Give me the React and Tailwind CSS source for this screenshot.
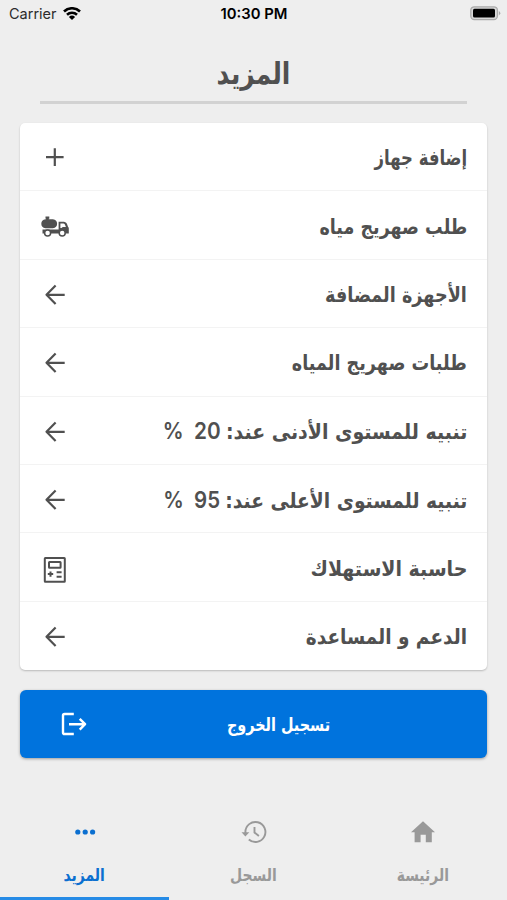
import React from 'react';

const PlusIcon = () => (
  <svg width="30" height="30" viewBox="0 0 30 30" fill="none" stroke="currentColor" strokeWidth="2.2">
    <path d="M14.800 5.300v17.600M6 14.100h17.600" />
  </svg>
);

const ArrowIcon = () => (
  <svg width="30" height="30" viewBox="0 0 30 30" fill="none" stroke="currentColor" strokeWidth="2.2">
    <path d="M15.600 5.600 6.500 14.800l9.100 9.200M6.500 14.800h18.200" strokeLinejoin="round" />
  </svg>
);

const TankerIcon = () => (
  <svg width="30" height="30" viewBox="0 0 30 30" fill="currentColor">
    <path d="M5.500 4.500h3.800v2.200h-.6v.6h4.200q4.200.600 4.200 4.500t-4.200 4.500H5.500Q1.300 15.700 1.300 11.800t4.200-4.500h.6v-.6h-.6z" />
    <path d="M2.500 17.400H18.600V9.800h5.200c1.600 0 2.500.9 3.200 2.300l1 2.700q.8.500.8 1.700v5H2.500z" />
    <path d="M20.400 11.500h2.800q1.200 0 1.700 1l1 2.600h-3.100l-1.300 1h-1.100z" fill="#fff" />
    <circle cx="7.600" cy="21" r="3" fill="#fff" stroke="currentColor" strokeWidth="1.500" />
    <circle cx="22.200" cy="21" r="3" fill="#fff" stroke="currentColor" strokeWidth="1.500" />
  </svg>
);

const CalculatorIcon = () => (
  <svg width="30" height="30" viewBox="0 0 30 30" fill="none" stroke="currentColor" strokeWidth="2">
    <rect x="4.800" y="4" width="20" height="23.800" rx="0.500" />
    <rect x="9" y="8.100" width="11.600" height="5.700" rx="0.500" />
    <path d="M7.800 20.100h5.400M10.500 17.400v5.400M16.600 18.200h5M16.600 22.800h5" />
  </svg>
);

const LogoutIcon = () => (
  <svg width="30" height="30" viewBox="0 0 30 30" fill="none" stroke="currentColor" strokeWidth="2.400">
    <path d="M14.800 5H5.600Q4 5 4 6.600v16.800Q4 25 5.600 25h9.200" />
    <path d="M10 15.200h16M20.700 9.800l5.400 5.400-5.400 5.400" strokeLinejoin="round" />
  </svg>
);

const DotsIcon = () => (
  <svg width="28" height="28" viewBox="0 0 28 28" fill="currentColor">
    <circle cx="6.800" cy="14" r="2.600" />
    <circle cx="14.200" cy="14" r="2.600" />
    <circle cx="21.600" cy="14" r="2.600" />
  </svg>
);

const HistoryIcon = () => (
  <svg width="28" height="28" viewBox="0 0 28 28" fill="none" stroke="currentColor" strokeWidth="1.900">
    <path d="M5.400 15.500V14a10 10 0 1 1 3.400 7.500" />
    <path d="M1.500 14.200h7.800l-3.900 4.200z" fill="currentColor" stroke="none" />
    <path d="M14.500 9v5.500l4.400 3.500" />
  </svg>
);

const HomeIcon = () => (
  <svg width="28" height="28" viewBox="0 0 28 28" fill="currentColor">
    <path d="M14 3.200 26 14.300h-3.200V24.300h-6v-7.500h-5.200v7.500h-6V14.300H2z" />
  </svg>
);

const rows = [
  { label: 'إضافة جهاز', icon: PlusIcon, fit: 'scale-x-[0.784]' },
  { label: 'طلب صهريج مياه', icon: TankerIcon, fit: 'scale-x-[0.834]' },
  { label: 'الأجهزة المضافة', icon: ArrowIcon, fit: 'scale-x-[0.84]' },
  { label: 'طلبات صهريج المياه', icon: ArrowIcon, fit: 'scale-x-[0.838]' },
  { label: 'تنبيه للمستوى الأدنى عند:', value: '20', icon: ArrowIcon, fit: 'scale-x-[0.903]' },
  { label: 'تنبيه للمستوى الأعلى عند:', value: '95', icon: ArrowIcon, fit: 'scale-x-[0.891]' },
  { label: 'حاسبة الاستهلاك', icon: CalculatorIcon, fit: 'scale-x-[0.905]' },
  { label: 'الدعم و المساعدة', icon: ArrowIcon, fit: 'scale-x-[0.881]' },
];

const tabs = [
  { label: 'الرئيسة', icon: HomeIcon },
  { label: 'السجل', icon: HistoryIcon },
  { label: 'المزيد', icon: DotsIcon, active: true },
];

const StatusBar = () => (
  <div dir="ltr" className="grid h-7 grid-cols-3 items-center pl-[9px] pr-[6px] font-['Inter',sans-serif] text-black">
    <div className="flex items-center gap-1.5">
      <span className="text-[14.500px] text-[#2b2b2b]">Carrier</span>
      <svg width="18" height="14" viewBox="0 0 18 14" fill="none" stroke="currentColor" strokeWidth="2.600">
        <path d="M1 4.500a11.500 11.500 0 0 1 16 0" />
        <path d="M4 7.800a7.300 7.300 0 0 1 10 0" />
        <path d="M9 13 5.900 10a4.500 4.500 0 0 1 6.200 0z" fill="currentColor" stroke="none" />
      </svg>
    </div>
    <span className="pr-0.5 text-center text-[14.800px] font-semibold">10:30 PM</span>
    <svg className="justify-self-end" width="31" height="16" viewBox="0 0 31 16">
      <rect x="0.800" y="0.800" width="26.600" height="12.800" rx="3.500" fill="#d8d8d8" stroke="#aaa" strokeWidth="1.300" />
      <rect x="3" y="2.800" width="22" height="8.800" rx="1.500" fill="#000" />
      <path d="M28.800 5q3 2.200 0 4.400z" fill="#aaa" />
    </svg>
  </div>
);

const App = () => {
  return (
    <div
      dir="rtl"
      className="flex h-[900px] w-[507px] flex-col overflow-hidden bg-[#eee] font-['DejaVu_Sans',sans-serif] text-[#505050]"
    >
      <StatusBar />

      <header className="mx-10 flex h-[76px] items-center justify-center border-b-[3px] border-[#d2d2d2] pt-[18px]">
        <h1 className="scale-x-[0.83] text-[30px] font-bold">المزيد</h1>
      </header>

      <ul className="mx-5 mt-[19px] h-[547px] rounded-[5px] bg-white shadow-[0_1px_2px_rgba(0,0,0,0.22)]">
        {rows.map(({ label, value, icon: Icon, fit }) => (
          <li
            key={label}
            className="flex h-[68.400px] items-center justify-between border-b border-[#f3f3f3] px-5 pt-[3px] last:border-b-0"
          >
            <span className={`inline-block origin-right whitespace-pre text-[21px] leading-8 font-bold ${fit}`}>
              {label}
              {value && <span className="font-['Inter'] text-[23px] font-semibold">{` ${value}  %`}</span>}
            </span>
            <Icon />
          </li>
        ))}
      </ul>

      <button className="mx-5 mt-5 flex h-[68px] items-center rounded-[6px] bg-[#0073dd] pl-[39px] text-white shadow-[0_1px_3px_rgba(0,0,0,0.35)]">
        <span className="flex-1 pr-[20px] text-center">
          <span className="inline-block scale-x-[0.8] text-[18px] font-bold">تسجيل الخروج</span>
        </span>
        <LogoutIcon />
      </button>

      <nav className="mt-auto grid h-[82px] grid-cols-3 text-[#999]">
        {tabs.map(({ label, icon: Icon, active }) => (
          <a
            key={label}
            className={`flex flex-col items-center gap-[17px] border-b-[3px] ${
              active ? 'border-[#268be6] text-[#0b6fd0]' : 'border-transparent'
            }`}
          >
            <Icon />
            <span className="inline-block scale-x-[0.82] text-[17px] font-bold">{label}</span>
          </a>
        ))}
      </nav>
    </div>
  );
};

export default App;
